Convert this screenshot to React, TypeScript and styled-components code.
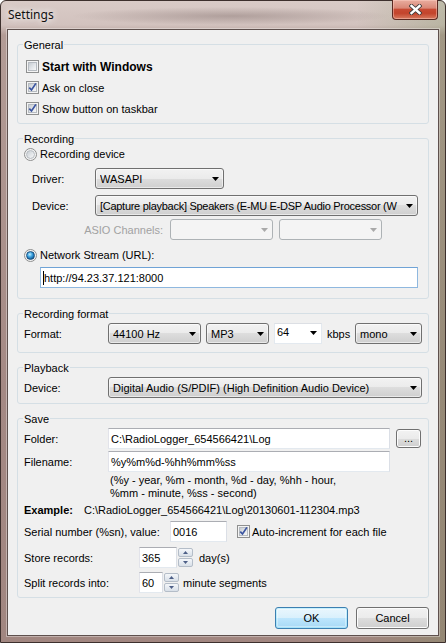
import React from "react";
import styled, { createGlobalStyle, css } from "styled-components";

const Global = createGlobalStyle`
  html, body { margin: 0; padding: 0; background: #ffffff; }
  body { width: 446px; height: 643px; overflow: hidden; }
`;

const Window = styled.div`
  box-sizing: border-box;
  width: 446px;
  height: 643px;
  display: flex;
  flex-direction: column;
  padding: 0 6px 6px 6px;
  border: 1px solid #3d302d;
  border-radius: 6px 6px 0 0;
  background:
    radial-gradient(ellipse 160px 9px at 230px 15px, rgba(80, 60, 58, 0.28), rgba(80, 60, 58, 0) 100%),
    linear-gradient(90deg, rgba(0, 0, 0, 0) 80%, rgba(110, 140, 80, 0.25) 100%),
    linear-gradient(180deg, #d9cbc7 0px, #d2c2be 24px, #b39c96 34px, #a48984 60%, #a18680 100%);
  font-family: "Liberation Sans", Arial, sans-serif;
  font-size: 11px;
  color: #000;
`;

const TitleBar = styled.div`
  height: 28px;
  display: flex;
  align-items: flex-start;
  flex: none;
`;

const Title = styled.div`
  margin: 6px 0 0 1px;
  font-family: "Noto Sans", "Open Sans", sans-serif;
  font-size: 12px;
  line-height: 16px;
  color: #101010;
  text-shadow: 0 0 6px rgba(255, 255, 255, 0.95), 0 0 10px rgba(255, 255, 255, 0.8);
`;

const CloseButton = styled.div`
  margin: -1px 1px 0 auto;
  box-sizing: border-box;
  width: 46px;
  height: 20px;
  display: flex;
  align-items: center;
  justify-content: center;
  border: 1px solid #5b2a22;
  border-top: none;
  border-radius: 0 0 4px 4px;
  background: linear-gradient(180deg, #e9ad9f 0%, #d98877 42%, #c74a33 50%, #c3442c 70%, #d87a5f 100%);
  box-shadow: inset 0 0 0 1px rgba(255, 210, 200, 0.45);
`;

const Client = styled.div`
  flex: 1;
  display: flex;
  flex-direction: column;
  gap: 14px;
  padding: 14px 9px 6px 9px;
  background: #f0f0f0;
  border: 1px solid #5e504d;
  box-shadow: 0 0 0 1px rgba(255, 255, 255, 0.35);
`;

const Group = styled.section<{ $pb: number }>`
  display: flex;
  flex-direction: column;
  padding: 0 8px ${(p) => p.$pb}px 6px;
  border: 1px solid #d5dfe5;
  border-radius: 3px;
`;

const Legend = styled.div`
  align-self: flex-start;
  height: 14px;
  line-height: 14px;
  margin: -7px 0 0 -1px;
  padding: 0 1px;
  background: #f0f0f0;
`;

const FieldRow = styled.div<{ $mt?: number; $pl?: number; $gap?: number; $h?: number }>`
  display: flex;
  align-items: center;
  height: ${(p) => p.$h ?? 21}px;
  margin-top: ${(p) => p.$mt ?? 0}px;
  padding-left: ${(p) => p.$pl ?? 0}px;
  gap: ${(p) => p.$gap ?? 0}px;
  white-space: nowrap;
`;

const Label = styled.span<{ $w: number; $right?: boolean; $muted?: boolean }>`
  box-sizing: border-box;
  flex: none;
  width: ${(p) => p.$w}px;
  ${(p) =>
    p.$right &&
    css`
      text-align: right;
      padding-right: 7px;
    `}
  color: ${(p) => (p.$muted ? "#a2a2a2" : "#000")};
`;

const Bold = styled.span<{ $w?: number; $size?: number }>`
  font-weight: bold;
  flex: none;
  ${(p) => p.$w && css`width: ${p.$w}px;`}
  ${(p) => p.$size && css`font-size: ${p.$size}px;`}
`;

const ComboBox = styled.div<{ $w: number; $disabled?: boolean; $editable?: boolean }>`
  box-sizing: border-box;
  flex: none;
  width: ${(p) => p.$w}px;
  height: 21px;
  display: flex;
  align-items: center;
  gap: 3px;
  padding: 0 4px 0 4px;
  border: 1px solid #707070;
  border-radius: 3px;
  background: linear-gradient(180deg, #f2f2f2 0%, #ebebeb 50%, #dddddd 50%, #cfcfcf 100%);
  box-shadow: inset 0 0 0 1px rgba(255, 255, 255, 0.55);
  ${(p) =>
    p.$disabled &&
    css`
      border-color: #adb2b5;
      background: #f4f4f4;
      box-shadow: none;
    `}
  ${(p) =>
    p.$editable &&
    css`
      border-color: #e3e9ef;
      border-top-color: #dcdfe4;
      background: #ffffff;
      box-shadow: none;
      border-radius: 0;
      padding-left: 2px;
      align-items: flex-start;
      padding-top: 2px;
    `}
`;

const ComboText = styled.span<{ $tight?: boolean }>`
  flex: 1;
  min-width: 0;
  overflow: hidden;
  white-space: nowrap;
  ${(p) => p.$tight && css`letter-spacing: -0.28px;`}
`;

const ArrowIcon = styled.svg`
  flex: none;
`;

const DropArrow = ({ disabled, top }: { disabled?: boolean; top?: boolean }) => (
  <ArrowIcon width="7" height="4" viewBox="0 0 7 4" style={top ? { marginTop: 5 } : undefined}>
    <path d="M0 0h7L3.5 4z" fill={disabled ? "#a9a9a9" : "#000"} />
  </ArrowIcon>
);

const Combo = ({
  w,
  text,
  disabled,
  editable,
  tight,
}: {
  w: number;
  text?: string;
  disabled?: boolean;
  editable?: boolean;
  tight?: boolean;
}) => (
  <ComboBox $w={w} $disabled={disabled} $editable={editable}>
    <ComboText $tight={tight}>{text}</ComboText>
    <DropArrow disabled={disabled} top={editable} />
  </ComboBox>
);

const TextBox = styled.div<{ $w: number; $focused?: boolean; $ml?: number }>`
  box-sizing: border-box;
  flex: none;
  width: ${(p) => p.$w}px;
  height: 21px;
  margin-left: ${(p) => p.$ml ?? 0}px;
  display: flex;
  align-items: center;
  padding-left: 2px;
  background: #ffffff;
  border: 1px solid #e3e9ef;
  border-top-color: #abadb3;
  border-left-color: #e2e3ea;
  border-right-color: #dbdfe6;
  overflow: hidden;
  white-space: nowrap;
  ${(p) =>
    p.$focused &&
    css`
      border-color: #8fb8df;
      border-top-color: #6fa3d6;
    `}
`;

const Caret = styled.span`
  display: inline-block;
  width: 1px;
  height: 14px;
  background: #000;
`;

const BoxOuter = styled.span<{ $round?: boolean }>`
  box-sizing: border-box;
  flex: none;
  width: 13px;
  height: 13px;
  display: flex;
  align-items: center;
  justify-content: center;
  border: 1px solid #8e8f8f;
  background: #f4f4f4;
  border-radius: ${(p) => (p.$round ? "50%" : "0")};
`;

const BoxInner = styled.span<{ $round?: boolean; $on?: boolean }>`
  box-sizing: border-box;
  width: 9px;
  height: 9px;
  display: flex;
  align-items: center;
  justify-content: center;
  border: 1px solid #b6bbc1;
  background: linear-gradient(135deg, #c7ccd2 0%, #e3e6e9 55%, #f7f7f7 100%);
  border-radius: ${(p) => (p.$round ? "50%" : "0")};
  ${(p) =>
    p.$round &&
    p.$on &&
    css`
      border-color: #1a4f7d;
      background: radial-gradient(circle at 40% 35%, #c4efff 0%, #3aa2e0 40%, #145f9c 75%, #0c3e68 100%);
    `}
`;

const CheckMark = styled.svg`
  overflow: visible;
`;

const CheckBox = ({ checked }: { checked?: boolean }) => (
  <BoxOuter>
    <BoxInner>
      {checked && (
        <CheckMark width="7" height="7" viewBox="0 0 7 7">
          <path d="M0.3 3.6 L2.5 6 L6.9 -0.6" fill="none" stroke="#3a54a0" strokeWidth="1.7" />
        </CheckMark>
      )}
    </BoxInner>
  </BoxOuter>
);

const Radio = ({ checked }: { checked?: boolean }) => (
  <BoxOuter $round>
    <BoxInner $round $on={checked} />
  </BoxOuter>
);

const SpinColumn = styled.div`
  flex: none;
  width: 15px;
  height: 21px;
  display: flex;
  flex-direction: column;
  justify-content: space-between;
  padding: 1px 0;
  box-sizing: border-box;
`;

const SpinButton = styled.div`
  box-sizing: border-box;
  height: 9px;
  display: flex;
  align-items: center;
  justify-content: center;
  border: 1px solid #b4bdc8;
  border-radius: 2px;
  background: linear-gradient(180deg, #f5f7fa 0%, #e6ebf1 50%, #d9e0e8 100%);
`;

const Spin = () => (
  <SpinColumn>
    <SpinButton>
      <svg width="5" height="3" viewBox="0 0 5 3">
        <path d="M0 3h5L2.5 0z" fill="#4d5f87" />
      </svg>
    </SpinButton>
    <SpinButton>
      <svg width="5" height="3" viewBox="0 0 5 3">
        <path d="M0 0h5L2.5 3z" fill="#4d5f87" />
      </svg>
    </SpinButton>
  </SpinColumn>
);

const PushButton = styled.div<{ $w: number; $h: number; $default?: boolean }>`
  box-sizing: border-box;
  flex: none;
  width: ${(p) => p.$w}px;
  height: ${(p) => p.$h}px;
  display: flex;
  align-items: center;
  justify-content: center;
  border: 1px solid #707070;
  border-radius: 3px;
  background: linear-gradient(180deg, #f2f2f2 0%, #ebebeb 50%, #dddddd 50%, #cfcfcf 100%);
  box-shadow: inset 0 0 0 1px #fcfcfc;
  ${(p) =>
    p.$default &&
    css`
      border-color: #3c7fb1;
      background: linear-gradient(180deg, #eaf6fd 0%, #d9f0fc 50%, #bee6fd 50%, #a7d9f5 100%);
      box-shadow: inset 0 0 0 1px rgba(72, 216, 251, 0.25), inset 0 0 0 2px rgba(255, 255, 255, 0.35);
    `}
`;

const HelpText = styled.div`
  margin: 2px 0 0 86px;
  line-height: 13px;
`;

const ButtonBar = styled.div`
  display: flex;
  justify-content: flex-end;
  gap: 8px;
  margin-top: -5px;
`;

const Dots = styled.span`
  margin-top: -2px;
`;

export default function App() {
  return (
    <>
      <Global />
      <Window>
        <TitleBar>
          <Title>Settings</Title>
          <CloseButton>
            <svg width="13" height="11" viewBox="0 0 13 11">
              <path d="M2.5 2 L10.5 9 M10.5 2 L2.5 9" stroke="#3b3b3b" strokeWidth="4.2" strokeLinecap="square" />
              <path d="M2.5 2 L10.5 9 M10.5 2 L2.5 9" stroke="#ffffff" strokeWidth="2.4" strokeLinecap="square" />
            </svg>
          </CloseButton>
        </TitleBar>
        <Client>
          <Group $pb={4}>
            <Legend>General</Legend>
            <FieldRow $mt={4} $pl={2} $gap={3}>
              <CheckBox />
              <Bold $size={12}>Start with Windows</Bold>
            </FieldRow>
            <FieldRow $pl={2} $gap={3}>
              <CheckBox checked />
              <span>Ask on close</span>
            </FieldRow>
            <FieldRow $pl={2} $gap={3}>
              <CheckBox checked />
              <span>Show button on taskbar</span>
            </FieldRow>
          </Group>

          <Group $pb={10}>
            <Legend>Recording</Legend>
            <FieldRow $h={16} $gap={3}>
              <Radio />
              <span>Recording device</span>
            </FieldRow>
            <FieldRow $mt={6} $pl={8}>
              <Label $w={63}>Driver:</Label>
              <Combo w={129} text="WASAPI" />
            </FieldRow>
            <FieldRow $mt={6} $pl={8}>
              <Label $w={63}>Device:</Label>
              <Combo w={323} tight text="[Capture playback] Speakers (E-MU E-DSP Audio Processor (W" />
            </FieldRow>
            <FieldRow $mt={3} $pl={8}>
              <Label $w={138} $right $muted>
                ASIO Channels:
              </Label>
              <Combo w={103} disabled />
              <Label $w={6} />
              <Combo w={103} disabled />
            </FieldRow>
            <FieldRow $h={16} $mt={7} $gap={3}>
              <Radio checked />
              <span>Network Stream (URL):</span>
            </FieldRow>
            <FieldRow $mt={4}>
              <TextBox $w={378} $ml={16} $focused>
                <Caret />
                http://94.23.37.121:8000
              </TextBox>
            </FieldRow>
          </Group>

          <Group $pb={8}>
            <Legend>Recording format</Legend>
            <FieldRow $mt={2} $gap={5}>
              <Label $w={79}>Format:</Label>
              <Combo w={93} text="44100 Hz" />
              <Combo w={63} text="MP3" />
              <Combo w={48} text="64" editable />
              <Label $w={23}>kbps</Label>
              <Combo w={67} text="mono" />
            </FieldRow>
          </Group>

          <Group $pb={5}>
            <Legend>Playback</Legend>
            <FieldRow $mt={2}>
              <Label $w={84}>Device:</Label>
              <Combo w={314} text="Digital Audio (S/PDIF) (High Definition Audio Device)" />
            </FieldRow>
          </Group>

          <Group $pb={4}>
            <Legend>Save</Legend>
            <FieldRow $mt={2}>
              <Label $w={84}>Folder:</Label>
              <TextBox $w={282}>{"C:\\RadioLogger_654566421\\Log"}</TextBox>
              <Label $w={6} />
              <PushButton $w={25} $h={19}>
                <Dots>...</Dots>
              </PushButton>
            </FieldRow>
            <FieldRow $mt={2}>
              <Label $w={84}>Filename:</Label>
              <TextBox $w={282}>%y%m%d-%hh%mm%ss</TextBox>
            </FieldRow>
            <HelpText>
              (%y - year, %m - month, %d - day, %hh - hour,
              <br />
              %mm - minute, %ss - second)
            </HelpText>
            <FieldRow $h={13} $mt={3}>
              <Bold $w={60}>Example:</Bold>
              <span>{"C:\\RadioLogger_654566421\\Log\\20130601-112304.mp3"}</span>
            </FieldRow>
            <FieldRow $mt={5}>
              <Label $w={146}>Serial number (%sn), value:</Label>
              <TextBox $w={57}>0016</TextBox>
              <Label $w={10} />
              <CheckBox checked />
              <Label $w={2} />
              <span>Auto-increment for each file</span>
            </FieldRow>
            <FieldRow $mt={5}>
              <Label $w={115}>Store records:</Label>
              <TextBox $w={38}>365</TextBox>
              <Label $w={1} />
              <Spin />
              <Label $w={6} />
              <span>day(s)</span>
            </FieldRow>
            <FieldRow $mt={4}>
              <Label $w={115}>Split records into:</Label>
              <TextBox $w={24}>60</TextBox>
              <Label $w={1} />
              <Spin />
              <Label $w={4} />
              <span>minute segments</span>
            </FieldRow>
          </Group>

          <ButtonBar>
            <PushButton $w={73} $h={22} $default>
              OK
            </PushButton>
            <PushButton $w={73} $h={22}>
              Cancel
            </PushButton>
          </ButtonBar>
        </Client>
      </Window>
    </>
  );
}
